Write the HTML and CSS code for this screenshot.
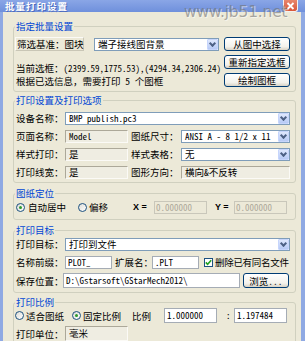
FILE: index.html
```html
<!DOCTYPE html>
<html lang="zh-CN">
  <head>
    <meta charset="UTF-8" />
    <title>批量打印设置</title>
    <link rel="stylesheet" href="styles.css">
  </head>
  <body>
    <div class="window">
      <div class="titlebar">
        <span class="title">批量打印设置</span>
        <span class="close">
          <svg width="9" height="8" viewBox="0 0 9 8"><path d="M1.5 1l6 6M7.5 1l-6 6" stroke="#fff" stroke-width="1.8" fill="none"/></svg>
        </span>
      </div>
      <div class="watermark">www.jb51.net</div>

      <div class="client">
        <!-- 指定批量设置 -->
        <fieldset class="group g1">
          <legend>指定批量设置</legend>
          <div class="g1-body">
            <div class="g1-left">
              <div class="g1-row">
                <div class="static">筛选基准：图块</div>
                <div class="combo block-combo"><span>端子接线图背景</span><span class="arrow"></span></div>
              </div>
              <div class="line line-2">当前选框：<span class="num">(2399.59,1775.53),(4294.34,2306.24)</span></div>
              <div class="line line-3">根据已选信息，需要打印 5 个图框</div>
            </div>
            <div class="btn-col">
              <button class="btn">从图中选择</button>
              <button class="btn">重新指定选框</button>
              <button class="btn">绘制图框</button>
            </div>
          </div>
        </fieldset>

        <!-- 打印设置及打印选项 -->
        <fieldset class="group g2">
          <legend>打印设置及打印选项</legend>
          <div class="options-grid">
            <span class="lbl">设备名称：</span>
            <div class="combo span-3"><span class="num">BMP publish.pc3</span><span class="arrow"></span></div>

            <span class="lbl">页面名称：</span>
            <div class="field"><span class="num">Model</span></div>
            <span class="lbl lbl-2">图纸尺寸：</span>
            <div class="combo"><span class="num">ANSI A - 8 1/2 x 11</span><span class="arrow"></span></div>

            <span class="lbl">样式打印：</span>
            <div class="field">是</div>
            <span class="lbl lbl-2">样式表格：</span>
            <div class="combo"><span>无</span><span class="arrow"></span></div>

            <span class="lbl">打印线宽：</span>
            <div class="field">是</div>
            <span class="lbl lbl-2">图形方向：</span>
            <div class="field">横向&amp;不反转</div>
          </div>
        </fieldset>

        <!-- 图纸定位 -->
        <fieldset class="group g3">
          <legend>图纸定位</legend>
          <div class="row">
            <span class="radio on"></span>
            <span class="opt opt-auto">自动居中</span>
            <span class="radio r-offset"></span>
            <span class="opt opt-offset">偏移</span>
            <span class="axis axis-x">X =</span>
            <div class="edit disabled w53"><span class="num">0.000000</span></div>
            <span class="axis axis-y">Y =</span>
            <div class="edit disabled w53"><span class="num">0.000000</span></div>
          </div>
        </fieldset>

        <!-- 打印目标 -->
        <fieldset class="group g4">
          <legend>打印目标</legend>
          <div class="rows">
            <div class="row">
              <span class="lbl w49">打印目标：</span>
              <div class="combo grow"><span>打印到文件</span><span class="arrow"></span></div>
            </div>
            <div class="row">
              <span class="lbl w49">名称前缀：</span>
              <div class="edit w47"><span class="num">PLOT_</span></div>
              <span class="lbl ext-lbl">扩展名：</span>
              <div class="edit w47"><span class="num">.PLT</span></div>
              <span class="check">
                <svg width="7" height="7" viewBox="0 0 7 7"><path d="M0.8 3.4l1.8 1.9L6.2 1.2" stroke="#21A121" stroke-width="1.6" fill="none"/></svg>
              </span>
              <span class="opt check-lbl">删除已有同名文件</span>
            </div>
            <div class="row row-tall">
              <span class="lbl w47">保存位置：</span>
              <div class="edit path"><span class="num">D:\Gstarsoft\GStarMech2012\</span></div>
              <button class="btn browse">浏览...</button>
            </div>
          </div>
        </fieldset>

        <!-- 打印比例 -->
        <fieldset class="group g5">
          <legend>打印比例</legend>
          <div class="rows rows-tight">
            <div class="row row-tall">
              <span class="radio r-fit"></span>
              <span class="opt opt-fit">适合图纸</span>
              <span class="radio on r-fixed"></span>
              <span class="opt opt-fixed">固定比例</span>
              <span class="opt ratio-lbl">比例</span>
              <div class="edit w53 tall"><span class="num">1.000000</span></div>
              <span class="colon">:</span>
              <div class="edit w53 tall"><span class="num">1.197484</span></div>
            </div>
            <div class="row row-tall">
              <span class="lbl w49">打印单位：</span>
              <div class="field unit tall">毫米</div>
            </div>
          </div>
        </fieldset>
      </div>
    </div>
  </body>
</html>
```

FILE: styles.css
```css
* {
  box-sizing: border-box;
}

body {
  margin: 0;
  font-family: "Noto Sans Mono CJK SC", "Noto Sans CJK SC", sans-serif;
  font-size: 9.5px;
  color: #000;
  background: #fff;
}

.window {
  position: relative;
  width: 305px;
  height: 341px;
  overflow: hidden;
  background: #ece9d8;
}

/* Title bar */
.titlebar {
  height: 12px;
  display: flex;
  align-items: flex-start;
  background: linear-gradient(#8aa6e6, #6f90dc);
}
.title {
  margin: 0 0 0 5px;
  font-family: "Noto Sans CJK SC", sans-serif;
  font-size: 9.5px;
  font-weight: bold;
  line-height: 12px;
  letter-spacing: 1px;
  color: #fff;
  text-shadow: 1px 1px 0 #4d6bbd;
}
.close {
  margin-left: auto;
  margin-right: 7px;
  width: 15px;
  height: 12px;
  display: flex;
  align-items: center;
  justify-content: center;
  background: linear-gradient(#e8866c, #d9573a);
  border: 1px solid #f4f1ee;
  border-top: none;
  border-radius: 0 0 3px 3px;
}

/* Watermark over the corner */
.watermark {
  position: absolute;
  left: 184px;
  top: 3px;
  font-family: "DejaVu Sans", sans-serif;
  font-size: 15.5px;
  letter-spacing: -0.2px;
  color: rgba(115, 115, 115, 0.6);
  text-shadow: 1px 1px 0 rgba(255, 255, 255, 0.5);
}

.client {
  height: 329px;
  padding: 9px 5px 0 10px;
  border-left: 3px solid #8fa9e3;
  border-right: 4px solid #8fa9e3;
  background: #ece9d8;
}

/* Group boxes */
.group {
  margin: 0;
  min-width: 0;
  padding: 6px 5px 4px 2px;
  border: 1px solid #d0d0bf;
  border-radius: 3px;
}
.group legend {
  margin-left: -1px;
  padding: 0 1px;
  font-size: 9.5px;
  line-height: 10px;
  color: #0046d5;
}
.g2 {
  margin-top: 3px;
  padding-bottom: 3px;
}
.g3 {
  margin-top: 5px;
  padding-top: 2px;
  padding-bottom: 5px;
}
.g4 {
  margin-top: 5px;
  padding-top: 2px;
}
.g5 {
  margin-top: 4px;
  padding-top: 1px;
}

.num {
  font-size: 9px;
}

/* Controls */
.combo {
  height: 13px;
  display: flex;
  align-items: center;
  padding-left: 3px;
  background: #fff;
  border: 1px solid #7f9db9;
  white-space: nowrap;
  overflow: hidden;
  line-height: 11px;
}
.combo .arrow {
  margin-left: auto;
  flex: none;
  width: 11px;
  height: 11px;
  display: flex;
  align-items: center;
  justify-content: center;
  background: linear-gradient(#dfe8fd, #b7caf5);
  border: 1px solid #c6d5fc;
  border-radius: 1px;
}
.combo .arrow::after {
  content: "";
  width: 3px;
  height: 3px;
  margin-top: -2px;
  border-right: 2px solid #4d6185;
  border-bottom: 2px solid #4d6185;
  transform: rotate(45deg);
}

.field {
  height: 13px;
  padding-left: 3px;
  line-height: 11px;
  white-space: nowrap;
  border: 1px solid;
  border-color: #aca899 #fbfaf6 #fbfaf6 #aca899;
  background: #efede2;
}

.edit {
  height: 13px;
  padding-left: 2px;
  line-height: 11px;
  white-space: nowrap;
  overflow: hidden;
  background: #fff;
  border: 1px solid #a5acb5;
}
.edit.disabled {
  background: #ece9d8;
  border-color: #c9c7ba;
  color: #aca899;
  padding-left: 1px;
}
.tall {
  height: 15px;
  line-height: 13px;
}

.btn {
  height: 14px;
  width: 66px;
  padding: 0;
  font: inherit;
  line-height: 12px;
  color: #000;
  background: linear-gradient(#ffffff, #f3f2ec 70%, #d8d3c6);
  border: 1px solid #003c74;
  border-radius: 3px;
}

.radio {
  flex: none;
  width: 9px;
  height: 9px;
  display: flex;
  align-items: center;
  justify-content: center;
  border: 1px solid #1c5180;
  border-radius: 50%;
  background: linear-gradient(135deg, #dcdcd7, #fff);
}
.radio.on::after {
  content: "";
  width: 3px;
  height: 3px;
  border-radius: 50%;
  background: #2c9a2c;
}

.check {
  flex: none;
  width: 9px;
  height: 9px;
  display: flex;
  align-items: center;
  justify-content: center;
  border: 1px solid #1c5180;
  background: #fff;
}

.lbl,
.opt {
  white-space: nowrap;
  line-height: 12px;
}

/* Group 1 */
.g1-body {
  display: flex;
}
.g1-left {
  width: 203px;
  display: flex;
  flex-direction: column;
}
.g1-row {
  height: 14px;
  display: flex;
  align-items: center;
}
.static {
  width: 69px;
  height: 14px;
  margin-left: -1px;
  padding-left: 1px;
  line-height: 12px;
  white-space: nowrap;
  border: 1px solid;
  border-color: #fbfaf6 #c9c6b6 #c9c6b6 #fbfaf6;
}
.block-combo {
  width: 125px;
  margin-left: auto;
}
.line {
  height: 11px;
  line-height: 11px;
  white-space: nowrap;
}
.line-2 {
  margin-top: 12px;
}
.line-3 {
  margin-top: 2px;
}
.btn-col {
  margin-left: 5px;
  display: flex;
  flex-direction: column;
  gap: 4px;
}

/* Group 2 */
.options-grid {
  display: grid;
  grid-template-columns: 49px 63px 53px 109px;
  grid-auto-rows: 14px;
  row-gap: 4px;
  align-items: center;
}
.span-3 {
  grid-column: 2 / 5;
}
.lbl-2 {
  padding-left: 3px;
}

/* Rows used by groups 3-5 */
.rows {
  display: flex;
  flex-direction: column;
  gap: 4px;
}
.rows-tight {
  gap: 3px;
}
.row {
  height: 14px;
  display: flex;
  align-items: center;
}
.row-tall {
  height: 15px;
}
.grow {
  flex: 1;
}
.w47 {
  width: 47px;
  flex: none;
}
.w49 {
  width: 49px;
  flex: none;
}
.w53 {
  width: 53px;
  flex: none;
}

/* Group 3 */
.opt-auto {
  margin-left: 3px;
}
.r-offset {
  margin-left: 12px;
}
.opt-offset {
  margin-left: 2px;
}
.axis {
  width: 21px;
  font-family: "Liberation Sans", sans-serif;
  font-weight: bold;
  font-size: 9px;
}
.axis-x {
  margin-left: 25px;
}
.axis-y {
  margin-left: 8px;
  width: 19px;
}

/* Group 4 */
.ext-lbl {
  width: 37px;
  margin-left: 3px;
}
.check {
  margin-left: 5px;
}
.check-lbl {
  margin-left: 2px;
  letter-spacing: -0.3px;
}
.path {
  width: 177px;
  height: 15px;
  line-height: 13px;
}
.browse {
  width: 46px;
  height: 15px;
  margin-left: 3px;
}

/* Group 5 */
.r-fit {
  margin-left: -1px;
}
.opt-fit {
  margin-left: 2px;
}
.r-fixed {
  margin-left: 8px;
}
.opt-fixed {
  margin-left: 2px;
}
.ratio-lbl {
  margin-left: 11px;
  width: 32px;
}
.colon {
  width: 17px;
  padding-left: 9px;
  font-size: 9px;
}
.unit {
  width: 63px;
}
```
